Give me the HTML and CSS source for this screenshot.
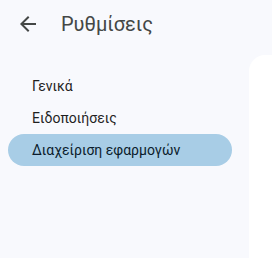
FILE: index.html
```html
<!DOCTYPE html>
<html lang="el">
<head>
<meta charset="utf-8">
<link rel="stylesheet" href="styles.css">
</head>
<body>
<header class="top">
  <svg class="back" viewBox="0 0 24 24" width="24" height="24"><path d="M20 11H7.83l5.59-5.59L12 4l-8 8 8 8 1.41-1.41L7.83 13H20v-2z"/></svg>
  <h1 class="title">Ρυθμίσεις</h1>
</header>
<div class="layout">
  <nav class="side">
    <a class="item">Γενικά</a>
    <a class="item">Ειδοποιήσεις</a>
    <a class="item active">Διαχείριση εφαρμογών</a>
  </nav>
  <main class="panel"></main>
</div>
</body>
</html>
```
FILE: styles.css
```css
html, body { margin: 0; height: 100%; }
body {
  background: #f8f9fd;
  font-family: Roboto, "Noto Sans", sans-serif;
  color: #1f1f1f;
  display: flex;
  flex-direction: column;
}
.top {
  height: 55px;
  display: flex;
  align-items: flex-start;
  padding: 12px 0 0 16px;
  box-sizing: border-box;
}
.back { fill: #444746; flex: none; }
.title {
  margin: 0 0 0 21px;
  font-size: 20px;
  font-weight: 400;
  line-height: 24px;
  color: #444746;
}
.layout { flex: 1; display: flex; }
.side {
  width: 249px;
  flex: none;
  padding: 15px 17px 0 8px;
  box-sizing: border-box;
  display: flex;
  flex-direction: column;
}
.item {
  height: 32px;
  line-height: 32px;
  padding-left: 24px;
  font-size: 14px;
  border-radius: 16px;
  color: #1f1f1f;
}
.item.active { background: #a8cde6; color: #0b1c2c; }
.panel { flex: 1; background: #fff; border-top-left-radius: 16px; }
```
